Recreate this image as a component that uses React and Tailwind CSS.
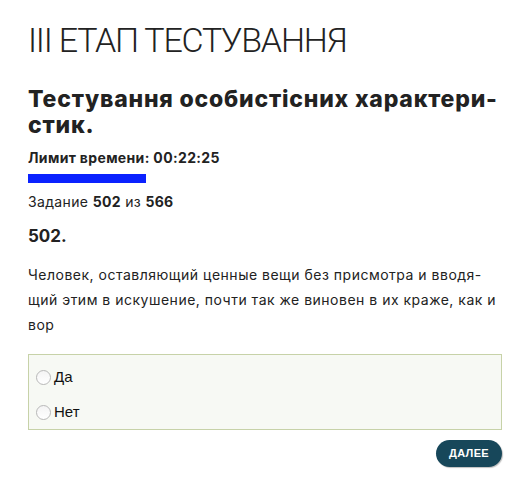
export default function App() {
    return (
        <div className="min-h-screen w-full bg-white text-[#222]">
            <div className="pl-[28px] pr-[15px] pt-[22px] pb-4 font-['Inter',sans-serif]">
                {/* Page title */}
                <h1 className="font-['Roboto',sans-serif] font-light text-[34px] leading-[36px] tracking-[-1.2px] text-[#222]">
                    III ЕТАП ТЕСТУВАННЯ
                </h1>

                {/* Test name */}
                <h2 className="mt-[28px] text-[23px] leading-[26px] font-extrabold tracking-[0.8px] whitespace-nowrap text-[#222]">
                    Тестування особистісних характери-<br />стик.
                </h2>

                {/* Timer */}
                <p className="mt-[11px] text-[14px] leading-[18px] font-bold tracking-[0.35px] text-[#222]">
                    Лимит времени: 00:22:25
                </p>
                <div className="mt-[7px] h-[9px] w-[118px] bg-[#0b22ff]"></div>

                <p className="mt-[10px] text-[14px] leading-[18px] tracking-[0.35px]">
                    Задание <b>502</b> из <b>566</b>
                </p>

                <p className="mt-[14px] text-[17px] leading-[22px] font-bold">502.</p>

                {/* Question */}
                <p className="mt-[15px] text-[14px] leading-[25px] tracking-[0.5px] whitespace-nowrap text-[#222]">
                    Человек, оставляющий ценные вещи без присмотра и вводя-<br />
                    щий этим в искушение, почти так же виновен в их краже, как и<br />
                    вор
                </p>

                {/* Answers */}
                <div className="mt-[17px] border border-[#c7d2a8] bg-[#f7f9f4] px-[7px] pt-[12px] pb-[7px] flex flex-col gap-[15px] font-['Liberation_Sans',Arial,sans-serif]">
                    {["Да", "Нет"].map((label) => (
                        <label key={label} className="flex items-center gap-[3px] text-[15px] leading-[20px] text-[#111]">
                            <span className="inline-block w-[15px] h-[15px] rounded-full border border-[#b8b8b8] bg-gradient-to-b from-[#f4f4f4] to-white"></span>
                            {label}
                        </label>
                    ))}
                </div>

                {/* Next button */}
                <div className="mt-[10px] flex justify-end">
                    <button className="h-[27px] w-[66px] rounded-full bg-[#17475a] text-white text-[11px] font-bold tracking-[0.3px] shadow-[1px_1px_1px_rgba(0,0,0,0.25)] font-['Liberation_Sans',Arial,sans-serif]">
                        ДАЛЕЕ
                    </button>
                </div>
            </div>
        </div>
    );
}
